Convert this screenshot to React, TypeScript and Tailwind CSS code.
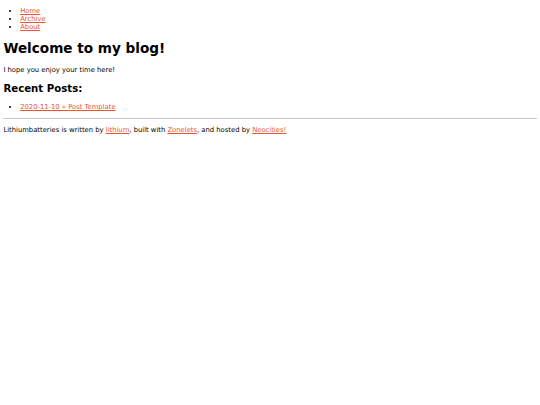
import React from 'react';

const linkCls = 'text-[#e9562f] underline';

export default function App() {
  return (
    <div
      className="min-h-screen bg-white px-[3.4px] pt-[6.7px] text-[6.8px] text-black"
      style={{ fontFamily: '"DejaVu Sans", Verdana, sans-serif', lineHeight: 'normal' }}
    >
      <ul className="list-disc pl-[16.8px]">
        <li><a href="#" className={linkCls}>Home</a></li>
        <li><a href="#" className={linkCls}>Archive</a></li>
        <li><a href="#" className={linkCls}>About</a></li>
      </ul>

      <h1 className="mt-[9.5px] text-[13.6px] font-bold">Welcome to my blog!</h1>
      <p className="mt-[9.5px]">I hope you enjoy your time here!</p>

      <h2 className="mt-[9px] text-[10.2px] font-bold">Recent Posts:</h2>
      <ul className="mt-[9.5px] list-disc pl-[16.8px]">
        <li><a href="#" className={linkCls}>2020-11-10 » Post Template</a></li>
      </ul>

      <hr className="mt-[6.8px] border-t border-[#c8c8c8]" />
      <p className="mt-[6.8px]">
        Lithiumbatteries is written by <a href="#" className={linkCls}>lithium</a>, built with{' '}
        <a href="#" className={linkCls}>Zonelets</a>, and hosted by{' '}
        <a href="#" className={linkCls}>Neocities!</a>
      </p>
    </div>
  );
}
